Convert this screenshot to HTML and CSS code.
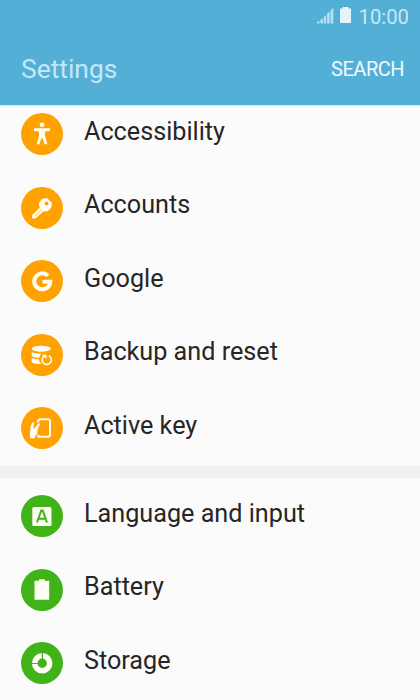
FILE: index.html
```html
<!DOCTYPE html>
<html lang="en">
<head>
<meta charset="utf-8">
<title>Settings</title>
<link rel="stylesheet" href="styles.css">
</head>
<body>
<header class="header">
  <div class="status">
    <svg class="signal" width="17" height="16" viewBox="0 0 17 16"><path d="M0 15.500V14l2.500-1v2.500zM3.300 15.500V12l2.500-1.700v5.200zM6.700 15.500V9l2.500-2v8.500zM10.100 15.500V5.800l2.500-2.200v11.900zM13.500 15.500V2.300L16.300 0v15.500z"/></svg>
    <svg class="cell" width="11" height="16" viewBox="0 0 11 16"><path d="M0 1.500h2.500V0h6v1.500H11V16H0z"/></svg>
    <span class="clock">10:00</span>
  </div>
  <div class="bar">
    <h1 class="title">Settings</h1>
    <span class="search">SEARCH</span>
  </div>
</header>
<main class="list">
  <section class="group orange">
    <div class="row">
      <svg class="icon" viewBox="0 0 42 42"><circle class="disc" cx="21" cy="21" r="21"/><circle cx="21" cy="11.800" r="2.400"/><path d="M13 15.300h16v2.600l-5 .6v4l2.300 8.500-2.600.6L21.500 25h-1l-2.200 6.600-2.600-.6 2.300-8.500v-4l-5-.6z"/></svg>
      <span class="label">Accessibility</span>
    </div>
    <div class="row">
      <svg class="icon" viewBox="0 0 42 42"><circle class="disc" cx="21" cy="21" r="21"/><path d="M21 11.800l5-.9 5 5-.9 5-3.600 3.400-4.300.2-7.700 7-3.300-.2-.2-3 7.700-7.500-.8-4.300z"/><circle class="disc" cx="25.600" cy="16.400" r="1.900"/><path class="cut hair" d="M13.500 29.200l7.500-7"/></svg>
      <span class="label">Accounts</span>
    </div>
    <div class="row">
      <svg class="icon" viewBox="0 0 42 42"><circle class="disc" cx="21" cy="21" r="21"/><path class="line g" d="M27 15.700a8 8 0 1 0 2.300 6H21.500"/></svg>
      <span class="label">Google</span>
    </div>
    <div class="row">
      <svg class="icon" viewBox="0 0 42 42"><circle class="disc" cx="21" cy="21" r="21"/><ellipse cx="20.200" cy="14.700" rx="9.600" ry="3"/><path d="M10.700 18c2.500 1.500 6 1.600 9.800 1.500-1.300 1.400-2 2.700-2.300 4.300-4 0-7.500-.6-7.500-2.300zM10.700 24c2 1 4.500 1.300 7.300 1.300.2 2 1 3.500 2.500 4.600-5 0-9.800-.6-9.800-2.500z"/><path class="line thin" d="M27.700 21.700a4.600 4.600 0 1 1-4.500.3"/><path d="M20.800 20.700h4.700v4.200z"/></svg>
      <span class="label">Backup and reset</span>
    </div>
    <div class="row">
      <svg class="icon" viewBox="0 0 42 42"><circle class="disc" cx="21" cy="21" r="21"/><path class="line" d="M16.800 15.500v-1.300l1.800-1.900h9.200l1.200 1.200v15l-1.200 1.300H17.300v-2"/><path d="M8.800 29.800l.8-10.500 2-4.300 1.700.7-1 5.300.8.700 4.500-5.700 1.500 1-2.500 5.800-.2 3.600-2.300 2.500-.4 2.400-4.300.2z"/></svg>
      <span class="label">Active key</span>
    </div>
  </section>
  <section class="group green">
    <div class="row">
      <svg class="icon" viewBox="0 0 42 42"><circle class="disc" cx="21" cy="21" r="21"/><rect x="11.300" y="12" width="19.200" height="19" rx="1.500"/><path class="cut wide" d="M16 27.500l4.300-12h1.400l4.300 12M17.500 23.800h7"/></svg>
      <span class="label">Language and input</span>
    </div>
    <div class="row">
      <svg class="icon" viewBox="0 0 42 42"><circle class="disc" cx="21" cy="21" r="21"/><path d="M13.500 11.800H18v-1.500h5.700v1.500h4.500v19H13.500z"/></svg>
      <span class="label">Battery</span>
    </div>
    <div class="row">
      <svg class="icon" viewBox="0 0 42 42"><circle class="disc" cx="21" cy="21" r="21"/><circle class="ring" cx="21.200" cy="21.200" r="7.500"/><path class="cut" d="M21.300 10v8M10 21.500h7.500"/></svg>
      <span class="label">Storage</span>
    </div>
  </section>
</main>
</body>
</html>
```
FILE: styles.css
```css
* { box-sizing: border-box; }
body {
  margin: 0;
  height: 700px;
  display: flex;
  flex-direction: column;
  overflow: hidden;
  background: #fbfbfb;
  color: #262626;
  font-family: Roboto, "Liberation Sans", sans-serif;
}
.header {
  flex: none;
  height: 105px;
  background: #54afd6;
}
.status {
  display: flex;
  align-items: center;
  justify-content: flex-end;
  height: 32px;
  padding-right: 11px;
  color: #c6e8f5;
}
.signal { margin: 0 6px 1px 0; fill: #b5e0f0; }
.cell { margin: 0 7px 2px 0; fill: #e3f5fb; }
.clock { font-size: 20.300px; line-height: 32px; padding-top: 2px; }
.bar {
  display: flex;
  align-items: center;
  justify-content: space-between;
  height: 73px;
  padding: 0 16px 0 21px;
}
.title {
  margin: 0;
  font-size: 26.400px;
  font-weight: 400;
  color: #c3e8f7;
}
.search { font-size: 20px; letter-spacing: -.5px; color: #effaff; }
.list { flex: 1; overflow: hidden; border-top: 1px solid #d3eaf4; }
.group { padding-bottom: 1px; }
.orange {
  --disc: #ffa200;
  margin-top: -8.500px;
  border-bottom: 12px solid #efefef;
}
.green { --disc: #3fb317; padding-top: 1.500px; }
.row {
  display: flex;
  align-items: center;
  height: 73.500px;
  padding-left: 21px;
}
.icon { flex: none; width: 42px; height: 42px; margin-right: 21px; fill: #fffdf4; }
.disc { fill: var(--disc); }
.line { fill: none; stroke: #fffdf4; stroke-width: 2; }
.thin { stroke-width: 1.600; }
.g { stroke-width: 4; }
.cut { fill: none; stroke: var(--disc); stroke-width: 1.200; }
.hair { stroke-width: .6; }
.wide { stroke-width: 2; }
.ring { fill: none; stroke: #fffdf4; stroke-width: 5.600; }
.label { font-size: 25.200px; line-height: 30px; padding-bottom: 5px; white-space: nowrap; }
```
